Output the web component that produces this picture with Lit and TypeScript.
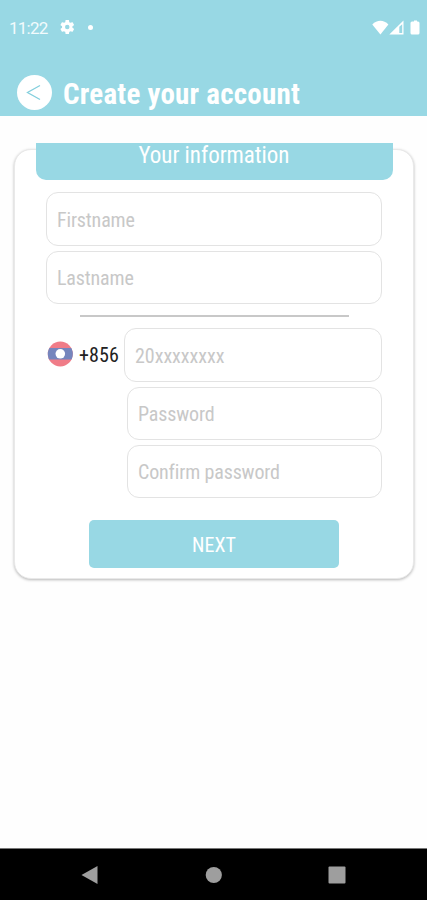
import { LitElement, html, css } from "lit";
import { customElement } from "lit/decorators.js";

@customElement("app-root")
export class AppRoot extends LitElement {
  static styles = css`
    :host {
      display: flex;
      flex-direction: column;
      width: 427px;
      height: 900px;
      overflow: hidden;
      background: #fefefe;
      font-family: "Roboto Condensed", Roboto, sans-serif;
      font-stretch: 75%;
      font-size: 20px;
    }
    * { box-sizing: border-box; }
    svg { display: block; flex: none; }
    .header { height: 115.5px; background: #98d8e4; color: #fff; flex: none; }
    .status { display: flex; align-items: center; height: 54px; padding: 0 7.5px 0 9px; }
    .time { width: 51px; font: 400 17px/20px Roboto, sans-serif; letter-spacing: -0.75px; color: #f2fbfd; padding-top: 2px; }
    .dot { width: 5px; height: 5px; border-radius: 50%; background: #fff; margin-left: 13.500px; }
    .signals { display: flex; align-items: center; margin-left: auto; }
    .titlebar { display: flex; align-items: center; padding: 20px 0 0 17px; }
    .back { width: 35px; height: 35px; border: 0; border-radius: 50%; background: #fff; padding: 0 2px 0 0; display: grid; place-items: center; }
    h1 { margin: 3px 0 0 11px; font-size: 29px; line-height: 34px; font-weight: 700; white-space: nowrap; letter-spacing: 0.23px; }
    .card {
      margin: 33.5px 13px 0 14px;
      height: 430px;
      flex: none;
      border-radius: 17px;
      background: #fff;
      border: 1px solid #e9e9e9;
      box-shadow: 0 1px 3px rgba(0, 0, 0, 0.28);
      display: flex;
      flex-direction: column;
      align-items: center;
    }
    .tab { width: 357px; height: 37px; flex: none; margin-top: -7px; background: #98d8e4; border-radius: 0 0 10px 10px; color: #fff; text-align: center; font-size: 23px; line-height: 26px; letter-spacing: -0.05px; }
    form { width: 336px; display: flex; flex-direction: column; align-items: flex-end; gap: 5px; padding-top: 12px; }
    input {
      display: block;
      width: 100%;
      height: 53.5px;
      margin: 0;
      padding: 2px 10px 0;
      border: 1.5px solid #e3e3e3;
      border-radius: 12px;
      background: #fff;
      font: inherit;
      font-stretch: inherit;
      letter-spacing: -0.15px;
      outline: none;
    }
    input::placeholder { color: #c8c8c8; opacity: 1; }
    .rule { width: 269px; height: 2px; background: #c8c8c8; align-self: center; margin: 6px 0; }
    .phone { display: flex; align-items: center; width: 100%; }
    .phone input { width: 258px; letter-spacing: -0.05px; }
    .flag { margin-bottom: 2px; }
    .code { width: 45px; margin-left: 6px; color: #222; white-space: nowrap; letter-spacing: 0.1px; }
    .narrow { width: 255px; height: 53px; }
    .next { width: 250px; height: 48px; margin: 17.500px 43px 0; border: 0; border-radius: 5px; background: #98d8e4; color: #fff; font: inherit; font-stretch: inherit; padding: 2px 0 0; }
    .nav { margin-top: auto; height: 52px; flex: none; background: #000; border-top: 1px solid #777; display: flex; justify-content: space-between; padding: 16.500px 81px 0 80px; }
  `;

  render() {
    return html`
      <header class="header">
        <div class="status">
          <span class="time">11:22</span>
          <svg width="14.500" height="16" viewBox="2 2 20 20"><path fill="#fff" d="M19.14 12.94c.04-.3.06-.61.06-.94s-.02-.64-.07-.94l2.03-1.58a.49.49 0 0 0 .12-.61l-1.92-3.32a.49.49 0 0 0-.59-.22l-2.39.96a7 7 0 0 0-1.62-.94l-.36-2.54a.48.48 0 0 0-.48-.41h-3.84a.47.47 0 0 0-.47.41l-.36 2.54c-.59.24-1.13.57-1.62.94l-2.39-.96a.48.48 0 0 0-.59.22L2.74 8.87a.47.47 0 0 0 .12.61l2.03 1.58a7 7 0 0 0 0 1.88l-2.03 1.58a.49.49 0 0 0-.12.61l1.92 3.32c.12.22.37.29.59.22l2.39-.96c.5.38 1.03.7 1.62.94l.36 2.54c.05.24.24.41.48.41h3.84c.24 0 .44-.17.47-.41l.36-2.54a7 7 0 0 0 1.62-.94l2.39.96c.22.08.47 0 .59-.22l1.92-3.32a.47.47 0 0 0-.12-.61zM12 15.1a3.1 3.1 0 1 1 0-6.2 3.1 3.1 0 0 1 0 6.2z"/></svg>
          <i class="dot"></i>
          <div class="signals">
            <svg width="17.500" height="15" viewBox="0 0 17.500 15"><path fill="#fff" d="M.3 4.400C5-.6 11.700-.6 16.400 4.400L8.400 14.500z"/></svg>
            <svg width="15.500" height="15" viewBox="0 0 15.500 15"><path fill="#fff" fill-rule="evenodd" d="M.3 14.500 14.500.5v14zM10.300 6.800V13h2.900V4.300z"/></svg>
            <svg width="15" height="15" viewBox="0 0 15 15"><path fill="#fff" d="M7 1.500h2V.5h3v1h1a1.500 1.500 0 0 1 1.500 1.500V13a1.500 1.500 0 0 1-1.500 1.500H7A1.500 1.500 0 0 1 5.500 13V3A1.500 1.500 0 0 1 7 1.500z"/></svg>
          </div>
        </div>
        <div class="titlebar">
          <button class="back" aria-label="Back">
            <svg width="15" height="17" viewBox="0 0 15 17"><path d="M14 1.500 1.500 8.500 14 15.500" fill="none" stroke="#83cfdd" stroke-width="1.300"/></svg>
          </button>
          <h1>Create your account</h1>
        </div>
      </header>
      <main class="card">
        <div class="tab">Your information</div>
        <form>
          <input placeholder="Firstname" />
          <input placeholder="Lastname" />
          <div class="rule"></div>
          <div class="phone">
            <svg class="flag" width="27" height="26" viewBox="0 0 27 26">
              <clipPath id="disc"><circle cx="14.300" cy="13" r="12.500"/></clipPath>
              <g clip-path="url(#disc)"><path fill="#f07c88" d="M0 0h27v26H0z"/><path fill="#7585bd" d="M0 7h27v11.500H0z"/></g>
              <circle cx="14.300" cy="12.800" r="4.800" fill="#fff"/>
            </svg>
            <span class="code">+856</span>
            <input placeholder="20xxxxxxxx" />
          </div>
          <input class="narrow" placeholder="Password" />
          <input class="narrow" placeholder="Confirm password" />
          <button type="button" class="next">NEXT</button>
        </form>
      </main>
      <nav class="nav">
        <svg width="18" height="18" viewBox="0 0 18 18"><path fill="#9e9e9e" d="M1.500 9 17.500 0v18z"/></svg>
        <svg width="18" height="18" viewBox="0 0 18 18"><circle cx="9.800" cy="9" r="8.100" fill="#9e9e9e"/></svg>
        <svg width="18" height="18" viewBox="0 0 18 18"><rect x=".5" y=".5" width="17" height="17" rx="1" fill="#9e9e9e"/></svg>
      </nav>
    `;
  }
}
